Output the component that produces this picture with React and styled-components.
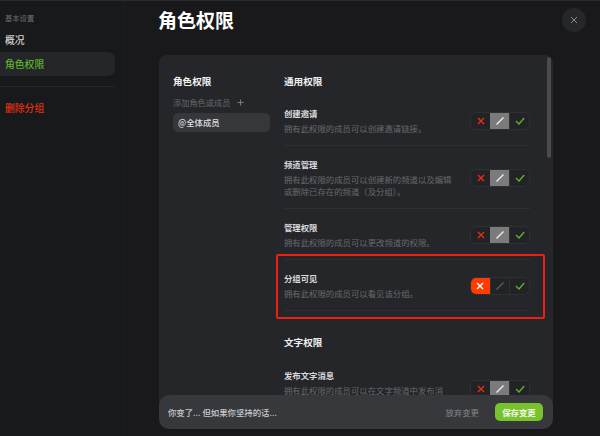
import React from "react";
import styled, { createGlobalStyle } from "styled-components";

const Global = createGlobalStyle`
  html, body { margin: 0; padding: 0; background: #19191b; }
  #root { width: 600px; height: 436px; }
  * { box-sizing: border-box; }
`;
const Page = styled.div`
  width: 600px; height: 436px; overflow: hidden; display: flex; position: relative;
  background: #19191b; border-top: 1px solid #2a2b2e;
  font-family: "Noto Sans CJK SC", "Noto Sans", sans-serif;
`;
const Sidebar = styled.nav`
  width: 125px; flex: none; padding: 12px 9px 0 0; display: flex; flex-direction: column;
  background: #18191b; border-right: 1px solid #1b1c1e;
`;
const SideLabel = styled.div`
  font-size: 7.3px; line-height: 11px; color: #6f7072; padding-left: 5px; margin-bottom: 4px;
`;
const SideItem = styled.div`
  height: 24px; line-height: 24px; padding-left: 5px; font-size: 9.8px; font-weight: 500;
  border-radius: ${p => (p.$active ? "0 7px 7px 0" : "0")};
  background: ${p => (p.$active ? "#25262a" : "transparent")};
  color: ${p => p.$color || "#d4d5d7"};
`;
const SideStack = styled.div`
  display: flex; flex-direction: column;
`;
const SideDivider = styled.div`
  height: 1px; background: #25262a; margin: 10px 0 9px;
`;
const Main = styled.main`
  flex: 1; min-width: 0; position: relative; padding: 0 47px 0 34px; display: flex; flex-direction: column;
`;
const Title = styled.h1`
  margin: 0 0 0 -1px; height: 54px; padding-top: 4px; font-size: 19px; line-height: 30px; font-weight: 700; color: #fff;
`;
const Close = styled.button`
  position: absolute; right: 14px; top: 7px; width: 24px; height: 24px; border-radius: 50%;
  border: 0; padding: 0; background: #26272a; color: #8a8b8e; display: flex; align-items: center; justify-content: center;
`;
const Card = styled.section`
  width: 394px; height: 366px; flex: none; overflow: hidden; position: relative; background: #25262a;
  border-radius: 8px; padding: 19px 23px 0 14px; display: flex; gap: 14px;
`;
const Scroll = styled.div`
  position: absolute; right: 2px; top: 2px; width: 4px; height: 101px; background: #4a4b4f; border-radius: 2px;
`;
const RoleCol = styled.div`
  width: 97px; flex: none;
`;
const Heading = styled.h2`
  margin: 0; font-size: 9.6px; line-height: 14px; font-weight: 700; color: #f2f2f3;
`;
const AddRole = styled.div`
  margin-top: 7px; display: flex; align-items: center; gap: 7px; height: 14px; color: #66676a; font-size: 8.2px;
`;
const Chip = styled.div`
  margin-top: 4px; height: 19px; line-height: 19px; padding-left: 5px; border-radius: 5px;
  background: #36373b; color: #dcdcde; font-size: 8.4px; font-weight: 500;
`;
const PermCol = styled.div`
  flex: 1; min-width: 0;
`;
const Section = styled.div`
  margin-top: ${p => (p.$first ? "0" : "24px")};
`;
const Rows = styled.div`
  margin-top: ${p => (p.$first ? "7px" : "8px")};
`;
const Row = styled.div`
  position: relative; display: flex; justify-content: space-between; align-items: center;
  padding: 12px 0 11px; border-bottom: 1px solid #2f3034;
`;
const Mark = styled.div`
  position: absolute; left: -8px; right: -15px; top: -6px; bottom: -9px; border: 2px solid #f01d12; border-radius: 2px; pointer-events: none;
`;
const RowText = styled.div`
  width: 172px;
`;
const RowTitle = styled.div`
  font-size: 8.4px; line-height: 12px; font-weight: 700; color: #d9dadc;
`;
const RowDesc = styled.div`
  margin-top: 3px; font-size: 8.4px; line-height: 12px; color: #68696c;
`;
const Toggle = styled.div`
  width: 60px; height: 18px; flex: none; display: flex; border: 1px solid #2f3034; border-radius: 6px; overflow: hidden; background: #222327;
`;
const Seg = styled.div`
  flex: 1; display: flex; align-items: center; justify-content: center;
  background: ${p => p.$bg || "transparent"};
  border-left: ${p => (p.$line ? "1px solid #2f3034" : "0")};
`;
const Footer = styled.div`
  position: absolute; left: 34px; top: 394px; width: 394px; height: 34px; border-radius: 10px;
  background: #37383c; display: flex; align-items: center; padding: 0 10px 0 9px;
`;
const FootText = styled.div`
  flex: 1; font-size: 8.4px; font-weight: 500; color: #c9cacc;
`;
const Discard = styled.div`
  font-size: 8.4px; color: #85868a; margin-right: 16px;
`;
const Save = styled.button`
  width: 48px; height: 18px; border: 0; border-radius: 5px; padding: 0; background: #78c22e; color: #f1f8e8;
  font: 700 8.4px "Noto Sans CJK SC", sans-serif;
`;

const X = ({ color }) => (
  <svg width="8" height="8" viewBox="0 0 8 8"><path d="M1 1l6 6M7 1L1 7" stroke={color} strokeWidth="1.4" fill="none" /></svg>
);
const Slash = ({ color }) => (
  <svg width="10" height="10" viewBox="0 0 10 10"><path d="M1.5 8.5L8.5 1.5" stroke={color} strokeWidth="1.3" fill="none" /></svg>
);
const Check = () => (
  <svg width="10" height="8" viewBox="0 0 10 8"><path d="M1 4l3 3 5.2-6" stroke="#5fb32a" strokeWidth="1.3" fill="none" /></svg>
);
const Tri = ({ deny }) => (
  <Toggle>
    <Seg $bg={deny ? "#ff3b00" : undefined}><X color={deny ? "#fff" : "#ee2b10"} /></Seg>
    <Seg $bg={deny ? undefined : "#7b7b7b"} $line={deny}><Slash color={deny ? "#5f6063" : "#f2f2f2"} /></Seg>
    <Seg $line><Check /></Seg>
  </Toggle>
);

const general = [
  ["创建邀请", "拥有此权限的成员可以创建邀请链接。"],
  ["频道管理", "拥有此权限的成员可以创建新的频道以及编辑或删除已存在的频道（及分组）。"],
  ["管理权限", "拥有此权限的成员可以更改频道的权限。"],
  ["分组可见", "拥有此权限的成员可以看见该分组。", true],
];

export default function App() {
  return (
    <Page>
      <Global />
      <Sidebar>
        <SideLabel>基本设置</SideLabel>
        <SideStack>
          <SideItem>概况</SideItem>
          <SideItem $active $color="#5fb32a">角色权限</SideItem>
        </SideStack>
        <SideDivider />
        <SideItem $color="#e5300f">删除分组</SideItem>
      </Sidebar>
      <Main>
        <Title>角色权限</Title>
        <Close aria-label="关闭">
          <svg width="8" height="8" viewBox="0 0 8 8"><path d="M1 1l6 6M7 1L1 7" stroke="currentColor" strokeWidth="1" fill="none" /></svg>
        </Close>
        <Card>
          <Scroll />
          <RoleCol>
            <Heading>角色权限</Heading>
            <AddRole>
              添加角色或成员
              <svg width="7" height="7" viewBox="0 0 7 7"><path d="M3.5 .5v6M.5 3.5h6" stroke="#7a7b7e" strokeWidth="1" fill="none" /></svg>
            </AddRole>
            <Chip>@全体成员</Chip>
          </RoleCol>
          <PermCol>
            <Section $first>
              <Heading>通用权限</Heading>
              <Rows $first>
                {general.map(([t, d, deny]) => (
                  <Row key={t}>
                    {deny && <Mark />}
                    <RowText>
                      <RowTitle>{t}</RowTitle>
                      <RowDesc>{d}</RowDesc>
                    </RowText>
                    <Tri deny={deny} />
                  </Row>
                ))}
              </Rows>
            </Section>
            <Section>
              <Heading>文字权限</Heading>
              <Rows>
                <Row>
                  <RowText>
                    <RowTitle>发布文字消息</RowTitle>
                    <RowDesc>拥有此权限的成员可以在文字频道中发布消息。</RowDesc>
                  </RowText>
                  <Tri />
                </Row>
              </Rows>
            </Section>
          </PermCol>
        </Card>
        <Footer>
          <FootText>你变了... 但如果你坚持的话...</FootText>
          <Discard>放弃变更</Discard>
          <Save>保存变更</Save>
        </Footer>
      </Main>
    </Page>
  );
}
